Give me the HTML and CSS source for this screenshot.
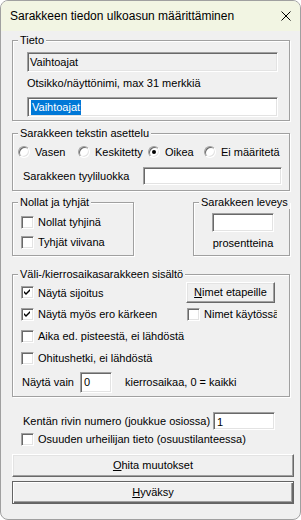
FILE: index.html
```html
<!DOCTYPE html>
<html lang="fi">
<head>
<meta charset="utf-8">
<title>Sarakkeen tiedon ulkoasun määrittäminen</title>
<link rel="stylesheet" href="styles.css">
</head>
<body>
<div class="window">
  <div class="titlebar">
    <span class="title">Sarakkeen tiedon ulkoasun määrittäminen</span>
    <svg class="close" width="10" height="10" viewBox="0 0 10 10"><path d="M0.5 0.5L9.5 9.5M9.5 0.5L0.5 9.5" stroke="#000" stroke-width="1" fill="none"/></svg>
  </div>
  <div class="content">
    <div class="group g-tieto">
      <span class="legend">Tieto</span>
      <div class="field readonly f-wide">Vaihtoajat</div>
      <div class="label l-otsikko">Otsikko/näyttönimi, max 31 merkkiä</div>
      <div class="field f-wide f-edit"><span class="sel">Vaihtoajat</span></div>
    </div>

    <div class="group g-asettelu">
      <span class="legend">Sarakkeen tekstin asettelu</span>
      <div class="radios">
        <label class="ritem r1"><span class="radio"></span><span>Vasen</span></label>
        <label class="ritem r2"><span class="radio"></span><span>Keskitetty</span></label>
        <label class="ritem r3"><span class="radio on"><span class="dot"></span></span><span>Oikea</span></label>
        <label class="ritem r4"><span class="radio"></span><span>Ei määritetä</span></label>
      </div>
      <div class="row-tyyli">
        <span class="label">Sarakkeen tyyliluokka</span>
        <div class="field f-tyyli"></div>
      </div>
    </div>

    <div class="pair">
      <div class="group g-nollat">
        <span class="legend">Nollat ja tyhjät</span>
        <label class="check c-first"><span class="cb"></span><span>Nollat tyhjinä</span></label>
        <label class="check c-second"><span class="cb"></span><span>Tyhjät viivana</span></label>
      </div>
      <div class="group g-leveys">
        <span class="legend">Sarakkeen leveys</span>
        <div class="leveys-col">
          <div class="field f-leveys"></div>
          <div class="label l-pros">prosentteina</div>
        </div>
      </div>
    </div>

    <div class="group g-vali">
      <span class="legend">Väli-/kierrosaikasarakkeen sisältö</span>
      <div class="vrow vr1">
        <label class="check c-left"><span class="cb"><svg width="7" height="7" viewBox="0 0 7 7"><path d="M0 2L2 4L6 0L6 2L2 6L0 4Z" fill="#000"/></svg></span><span>Näytä sijoitus</span></label>
        <button class="btn b-nimet" type="button"><u>N</u>imet etapeille</button>
      </div>
      <div class="vrow vr2">
        <label class="check c-left"><span class="cb"><svg width="7" height="7" viewBox="0 0 7 7"><path d="M0 2L2 4L6 0L6 2L2 6L0 4Z" fill="#000"/></svg></span><span>Näytä myös ero kärkeen</span></label>
        <label class="check c-right"><span class="cb"></span><span>Nimet käytössä</span></label>
      </div>
      <div class="vrow vr3">
        <label class="check"><span class="cb"></span><span>Aika ed. pisteestä, ei lähdöstä</span></label>
      </div>
      <div class="vrow vr4">
        <label class="check"><span class="cb"></span><span>Ohitushetki, ei lähdöstä</span></label>
      </div>
      <div class="vrow vr5">
        <span class="label">Näytä vain</span>
        <div class="field f-vain">0</div>
        <span class="label l-kierros">kierrosaikaa, 0 = kaikki</span>
      </div>
    </div>

    <div class="row-kentta">
      <span class="label">Kentän rivin numero (joukkue osiossa)</span>
      <div class="field f-kentta">1</div>
    </div>
    <label class="check c-osuus"><span class="cb"></span><span>Osuuden urheilijan tieto (osuustilanteessa)</span></label>

    <button class="btn b-wide b-ohita" type="button"><u>O</u>hita muutokset</button>
    <button class="btn b-wide b-default" type="button"><u>H</u>yväksy</button>
  </div>
</div>
</body>
</html>
```

FILE: styles.css
```css
* { box-sizing: border-box; }

html, body {
  margin: 0;
  padding: 0;
  background: #ffffff;
}

body {
  font-family: "Liberation Sans", Arial, sans-serif;
  font-size: 11px;
  color: #000;
}

.window {
  width: 301px;
  height: 520px;
  border: 1px solid #a0a0a0;
  border-radius: 8px;
  background: #f0f0f0;
  overflow: hidden;
  display: flex;
  flex-direction: column;
}

.titlebar {
  height: 30px;
  flex: none;
  background: #f2f5e3;
  display: flex;
  align-items: center;
  padding-left: 9px;
  padding-right: 9px;
}

.title {
  font-size: 12px;
  white-space: nowrap;
}

.close {
  margin-left: auto;
  display: block;
}

.content {
  padding-left: 11px;
  display: flex;
  flex-direction: column;
  align-items: flex-start;
}

.label {
  line-height: 13px;
  white-space: nowrap;
}

/* group boxes */
.group {
  position: relative;
  border: 1px solid #a0a0a0;
  box-shadow: inset 1px 1px 0 #fff, 1px 1px 0 #fff;
  width: 278px;
}

.legend {
  position: absolute;
  top: -7px;
  left: 5px;
  padding: 0 2px;
  background: #f0f0f0;
  line-height: 13px;
  white-space: nowrap;
}

/* text fields */
.field {
  height: 20px;
  border: 1px solid;
  border-color: #a0a0a0 #fff #fff #a0a0a0;
  box-shadow: inset 1px 1px 0 #696969, inset -1px -1px 0 #e3e3e3;
  background: #fff;
  line-height: 18px;
  padding-left: 3px;
  white-space: nowrap;
}

.field.readonly {
  background: #f0f0f0;
  padding-left: 2px;
}

.sel {
  display: inline-block;
  background: #0078d7;
  color: #fff;
  line-height: 15px;
  vertical-align: middle;
  padding: 0 1px;
  margin-top: -2px;
}

/* checkboxes & radios */
.check {
  display: flex;
  align-items: center;
  gap: 4px;
  height: 14px;
  white-space: nowrap;
}

.cb {
  width: 13px;
  height: 13px;
  flex: none;
  border: 1px solid;
  border-color: #a0a0a0 #fff #fff #a0a0a0;
  box-shadow: inset 1px 1px 0 #696969, inset -1px -1px 0 #e3e3e3;
  background: #fff;
  display: flex;
  align-items: center;
  justify-content: center;
}

.cb svg { display: block; }

.radio {
  width: 12px;
  height: 12px;
  flex: none;
  border-radius: 50%;
  border: 1px solid;
  border-color: #a0a0a0 #fff #fff #a0a0a0;
  box-shadow: inset 1px 1px 0 #696969, inset -1px -1px 0 #e3e3e3;
  background: #fff;
  display: flex;
  align-items: center;
  justify-content: center;
}

.dot {
  width: 4px;
  height: 4px;
  border-radius: 50%;
  background: #000;
}

/* buttons */
.btn {
  font-family: inherit;
  font-size: 11px;
  color: #000;
  background: #f0f0f0;
  border: 1px solid;
  border-color: #fff #696969 #696969 #fff;
  box-shadow: inset -1px -1px 0 #a0a0a0, inset 1px 1px 0 #e3e3e3;
  padding: 0;
  margin: 0;
  line-height: 13px;
  white-space: nowrap;
}

.btn u { text-decoration: underline; }

/* Tieto */
.g-tieto {
  margin-top: 9px;
  height: 81px;
  padding: 11px 0 0 14px;
}

.f-wide { width: 251px; }

.l-otsikko { margin-top: 5px; padding-left: 0; }

.f-edit { margin-top: 7px; }

/* Asettelu */
.g-asettelu {
  margin-top: 12px;
  height: 58px;
  padding: 12px 0 0 5px;
}

.radios {
  display: flex;
  height: 12px;
}

.ritem {
  display: flex;
  align-items: center;
  gap: 5px;
  white-space: nowrap;
}

.r1 { width: 60px; }
.r2 { width: 70px; }
.r3 { width: 56px; }

.row-tyyli {
  margin-top: 9px;
  display: flex;
  align-items: center;
  padding-left: 5px;
}

.f-tyyli {
  width: 139px;
  height: 18px;
  margin-left: auto;
}

.row-tyyli { width: 264px; }

/* pair */
.pair {
  margin-top: 11px;
  width: 278px;
  display: flex;
  justify-content: space-between;
}

.g-nollat {
  width: 122px;
  height: 54px;
  padding: 12px 0 0 8px;
}

.c-second { margin-top: 6px; }

.g-leveys {
  width: 97px;
  height: 54px;
  padding: 10px 0 0 18px;
}

.leveys-col {
  width: 62px;
  display: flex;
  flex-direction: column;
  align-items: center;
}

.f-leveys {
  width: 62px;
  height: 19px;
}

.l-pros { margin-top: 5px; }

/* väli */
.g-vali {
  margin-top: 18px;
  height: 123px;
  padding: 7px 0 0 8px;
}

.vrow {
  display: flex;
  align-items: center;
}

.vr1 { height: 21px; }
.vr2, .vr3, .vr4 { height: 22px; }
.vr5 { height: 21px; margin-top: 3px; padding-left: 1px; }

.c-left { width: 165px; }

.b-nimet {
  width: 89px;
  height: 21px;
}

.c-right {
  margin-left: 1px;
  width: 90px;
  overflow: hidden;
}

.f-vain {
  width: 32px;
  height: 21px;
  margin-left: 6px;
}

.l-kierros { margin-left: 13px; }

/* bottom */
.row-kentta {
  margin-top: 15px;
  width: 263px;
  padding-left: 11px;
  display: flex;
  align-items: center;
}

.f-kentta {
  width: 62px;
  height: 18px;
  margin-left: auto;
}

.c-osuus {
  margin-top: 2px;
  margin-left: 9px;
}

.b-wide {
  width: 282px;
  height: 23px;
}

.b-ohita { margin-top: 8px; }

.b-default {
  margin-top: 4px;
  border: 1px solid #646464;
  box-shadow: inset 1px 1px 0 #fff, inset -1px -1px 0 #696969, inset -2px -2px 0 #a0a0a0;
}
```
